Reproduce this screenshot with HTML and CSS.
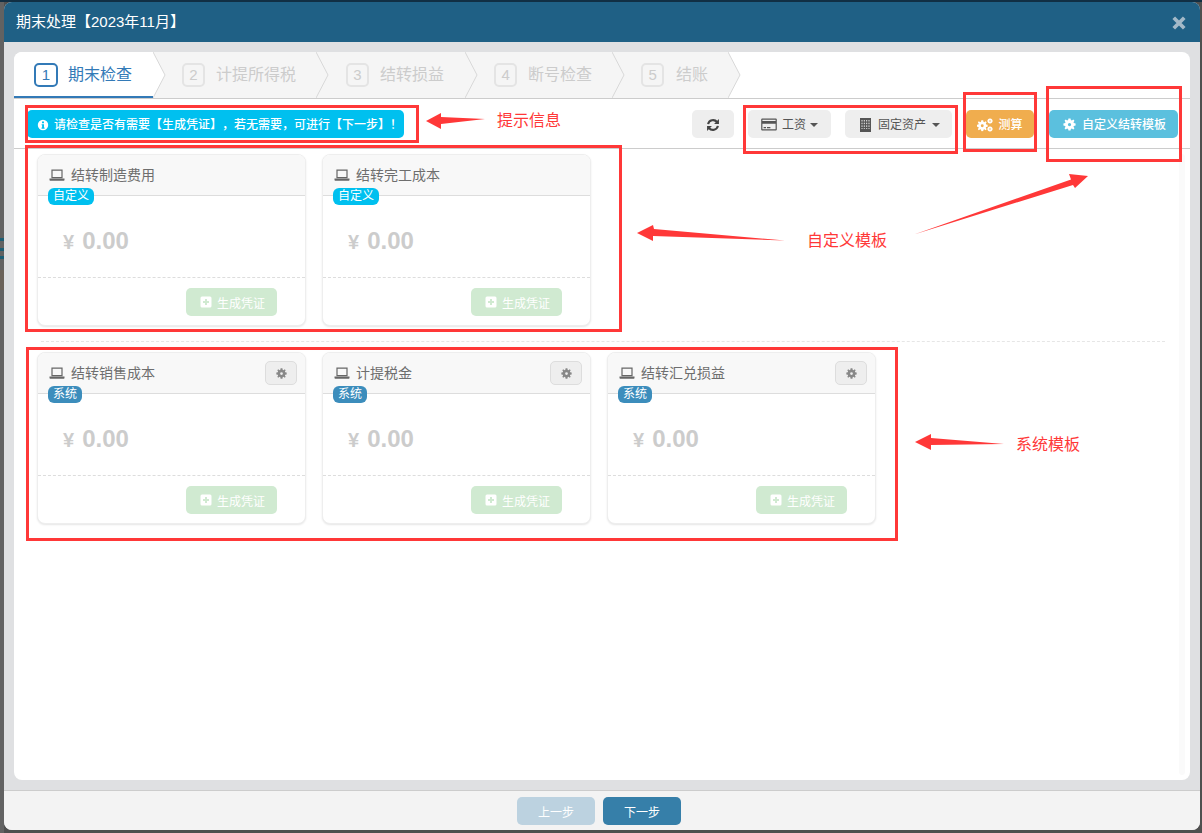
FILE: index.html
```html
<!DOCTYPE html>
<html lang="zh-CN">
<head>
<meta charset="utf-8">
<title>期末处理</title>
<link rel="stylesheet" href="styles.css">
</head>
<body>
<svg class="defs" width="0" height="0" aria-hidden="true">
  <defs>
    <symbol id="gear" viewBox="0 0 16 16"><path fill="currentColor" fill-rule="evenodd" d="M6.7.5H9.3L9.7 2.6 10.9 3.1 12.7 1.9 14.1 3.3 12.9 5.1 13.4 6.3 15.5 6.7V9.3L13.4 9.7 12.9 10.9 14.1 12.7 12.7 14.1 10.9 12.9 9.7 13.4 9.3 15.5H6.7L6.3 13.4 5.1 12.9 3.3 14.1 1.9 12.7 3.1 10.9 2.6 9.7.5 9.3V6.7L2.6 6.3 3.1 5.1 1.9 3.3 3.3 1.9 5.1 3.1 6.3 2.6ZM8 6A2 2 0 1 0 8 10 2 2 0 1 0 8 6Z"/></symbol>
    <symbol id="laptop" viewBox="0 0 16 14"><path fill="none" stroke="currentColor" stroke-width="1.2" d="M3 2.1H13V9.6H3Z"/><path fill="currentColor" d="M.5 10.6H15.5V12.2L14.8 12.8H1.2L.5 12.2Z"/></symbol>
    <symbol id="plus" viewBox="0 0 12 12"><path fill="#fff" fill-rule="evenodd" d="M2 .5H10A1.5 1.5 0 0 1 11.500 2V10A1.500 1.500 0 0 1 10 11.500H2A1.500 1.500 0 0 1 .5 10V2A1.500 1.500 0 0 1 2 .5ZM5 3V5H3V7H5V9H7V7H9V5H7V3Z"/></symbol>
  </defs>
</svg>

<div class="backdrop">
  <span class="peek-left"></span>
  <span class="peek-bar peek-a"></span>
  <span class="peek-bar peek-b"></span>
  <span class="peek-bar peek-c"></span>
  <span class="peek-photo"></span>
</div>

<main class="modal">
  <header class="modal-head">
    <h1 class="modal-title">期末处理【2023年11月】</h1>
    <svg class="close" viewBox="0 0 12 12" aria-label="关闭"><path d="M1.500 1.500 10.500 10.500M10.500 1.500 1.500 10.500"/></svg>
  </header>

  <div class="modal-body">
    <section class="panel">
      <nav class="tabs">
        <div class="tab active"><span class="num">1</span><span>期末检查</span><svg class="chev" viewBox="0 0 13 46"><path class="chev-fill" d="M0 0 12 23 0 46Z"/><path class="chev-line" d="M0 0 12 23 0 46"/></svg></div>
        <div class="tab"><span class="num">2</span><span>计提所得税</span><svg class="chev" viewBox="0 0 13 46"><path class="chev-fill" d="M0 0 12 23 0 46Z"/><path class="chev-line" d="M0 0 12 23 0 46"/></svg></div>
        <div class="tab tab-wide"><span class="num">3</span><span>结转损益</span><svg class="chev" viewBox="0 0 13 46"><path class="chev-fill" d="M0 0 12 23 0 46Z"/><path class="chev-line" d="M0 0 12 23 0 46"/></svg></div>
        <div class="tab"><span class="num">4</span><span>断号检查</span><svg class="chev" viewBox="0 0 13 46"><path class="chev-fill" d="M0 0 12 23 0 46Z"/><path class="chev-line" d="M0 0 12 23 0 46"/></svg></div>
        <div class="tab tab-last"><span class="num">5</span><span>结账</span><svg class="chev" viewBox="0 0 13 46"><path class="chev-fill" d="M0 0 12 23 0 46Z"/><path class="chev-line" d="M0 0 12 23 0 46"/></svg></div>
      </nav>

      <div class="toolbar">
        <div class="alert">
          <svg class="ico-12" viewBox="0 0 12 12"><path fill="#fff" fill-rule="evenodd" d="M6 .8A5.200 5.200 0 1 0 6 11.200 5.200 5.200 0 1 0 6 .8ZM5 2.500H7V4.300H5ZM4.600 5.200H7V8.600H7.600V9.700H4.500V8.600H5.100V6.300H4.600Z"/></svg>
          <span>请检查是否有需要【生成凭证】，若无需要，可进行【下一步】！</span>
        </div>
        <div class="actions">
          <button class="btn btn-refresh" aria-label="刷新">
            <svg class="ico-14" viewBox="0 0 16 16"><path fill="none" stroke="#444" stroke-width="2.400" d="M2.400 7A5.800 5.800 0 0 1 12.600 4.600M13.600 9A5.800 5.800 0 0 1 3.400 11.400"/><path fill="#444" d="M14.800 1.200V6.800H9.200ZM1.200 14.800V9.200H6.800Z"/></svg>
          </button>
          <button class="btn btn-grey">
            <svg class="ico-card" viewBox="0 0 16 13"><path fill="#555" fill-rule="evenodd" d="M1.200.5H14.800A1 1 0 0 1 15.800 1.500V11.500A1 1 0 0 1 14.800 12.500H1.200A1 1 0 0 1 .2 11.500V1.500A1 1 0 0 1 1.200.5ZM1.400 1.700V3H14.600V1.700ZM1.400 5.800V11.300H14.600V5.800ZM2.600 9H5V10.200H2.600ZM6 9H9.400V10.200H6Z"/></svg>
            <span>工资</span><i class="caret"></i>
          </button>
          <button class="btn btn-grey btn-assets">
            <svg class="ico-bld" viewBox="0 0 11 14"><path fill="#555" d="M0 0H11V14H0Z"/><path fill="none" stroke="#eee" stroke-width="1" stroke-dasharray="1.500 1.200" d="M2 2V11M4.300 2V11M6.700 2V11M9 2V11"/></svg>
            <span>固定资产</span><i class="caret"></i>
          </button>
          <button class="btn btn-orange">
            <svg class="ico-cogs" viewBox="0 0 16 14"><use href="#gear" x="-.5" y="2" width="11.500" height="11.500"/><use href="#gear" x="10" y="0" width="6" height="6"/><use href="#gear" x="10" y="8" width="6" height="6"/></svg>
            <span>测算</span>
          </button>
          <button class="btn btn-info">
            <svg class="ico-gear" viewBox="0 0 16 16"><use href="#gear"/></svg>
            <span>自定义结转模板</span>
          </button>
        </div>
      </div>

      <div class="content">
        <div class="card-row">
          <article class="card">
            <div class="card-head"><svg class="ico-laptop"><use href="#laptop"/></svg><span>结转制造费用</span></div>
            <span class="badge badge-custom">自定义</span>
            <div class="card-body"><span class="yen">¥</span><span class="amount">0.00</span></div>
            <div class="card-foot"><button class="btn-gen"><svg class="ico-plus"><use href="#plus"/></svg>生成凭证</button></div>
          </article>
          <article class="card">
            <div class="card-head"><svg class="ico-laptop"><use href="#laptop"/></svg><span>结转完工成本</span></div>
            <span class="badge badge-custom">自定义</span>
            <div class="card-body"><span class="yen">¥</span><span class="amount">0.00</span></div>
            <div class="card-foot"><button class="btn-gen"><svg class="ico-plus"><use href="#plus"/></svg>生成凭证</button></div>
          </article>
        </div>

        <hr class="divider">

        <div class="card-row">
          <article class="card">
            <div class="card-head"><svg class="ico-laptop"><use href="#laptop"/></svg><span>结转销售成本</span><button class="btn-set" aria-label="设置"><svg class="ico-set"><use href="#gear"/></svg></button></div>
            <span class="badge badge-system">系统</span>
            <div class="card-body"><span class="yen">¥</span><span class="amount">0.00</span></div>
            <div class="card-foot"><button class="btn-gen"><svg class="ico-plus"><use href="#plus"/></svg>生成凭证</button></div>
          </article>
          <article class="card">
            <div class="card-head"><svg class="ico-laptop"><use href="#laptop"/></svg><span>计提税金</span><button class="btn-set" aria-label="设置"><svg class="ico-set"><use href="#gear"/></svg></button></div>
            <span class="badge badge-system">系统</span>
            <div class="card-body"><span class="yen">¥</span><span class="amount">0.00</span></div>
            <div class="card-foot"><button class="btn-gen"><svg class="ico-plus"><use href="#plus"/></svg>生成凭证</button></div>
          </article>
          <article class="card">
            <div class="card-head"><svg class="ico-laptop"><use href="#laptop"/></svg><span>结转汇兑损益</span><button class="btn-set" aria-label="设置"><svg class="ico-set"><use href="#gear"/></svg></button></div>
            <span class="badge badge-system">系统</span>
            <div class="card-body"><span class="yen">¥</span><span class="amount">0.00</span></div>
            <div class="card-foot"><button class="btn-gen"><svg class="ico-plus"><use href="#plus"/></svg>生成凭证</button></div>
          </article>
        </div>
      </div>
      <span class="scroll-track"></span>
    </section>
  </div>

  <footer class="modal-foot">
    <button class="btn-step btn-prev">上一步</button>
    <button class="btn-step btn-next">下一步</button>
  </footer>
</main>

<div class="notes">
  <span class="box box-tip"></span>
  <span class="box box-custom"></span>
  <span class="box box-system"></span>
  <span class="box box-drop"></span>
  <span class="box box-calc"></span>
  <span class="box box-tpl"></span>
  <svg class="arrows" viewBox="0 0 1202 833">
    <path d="M426 121 441 113 441 117 485 119 441 124 441 129Z"/>
    <path d="M637 233 653 225 654 229 785 240.500 653 236 653 241Z"/>
    <path d="M914 234.500 1071 179.500 1069 174 1088 176 1075 188 1073 185Z"/>
    <path d="M915 442 931 434 931 438 1004 444 931 445 931 450Z"/>
  </svg>
  <span class="note note-tip">提示信息</span>
  <span class="note note-custom">自定义模板</span>
  <span class="note note-system">系统模板</span>
</div>
</body>
</html>
```

FILE: styles.css
```css
* { box-sizing: border-box; }

html, body { margin: 0; height: 100%; }

body {
  width: 1202px;
  height: 833px;
  overflow: hidden;
  background: #4f4f4f;
  font-family: "Liberation Sans", "Noto Sans CJK SC", sans-serif;
  font-size: 12px;
  color: #555;
  position: relative;
  padding: 2px 2px 3px 4px;
  text-spacing-trim: space-all;
}

button { font-family: inherit; border: 0; margin: 0; cursor: pointer; }

.defs { position: absolute; }

/* page behind the dialog */
.backdrop {
  position: absolute;
  inset: 0;
  border-top: 2px solid #112f44;
}
.peek-left { position: absolute; left: 0; top: 0; bottom: 0; width: 4px; background: #626262; }
.peek-bar { position: absolute; left: 0; width: 4px; height: 3px; background: #1b5d74; }
.peek-a { top: 236px; }
.peek-b { top: 246px; }
.peek-c { top: 254px; }
.peek-photo { position: absolute; left: 0; top: 268px; width: 4px; height: 20px; background: #6b6259; }

/* dialog */
.modal {
  position: relative;
  height: 828px;
  display: flex;
  flex-direction: column;
  border-radius: 8px;
  overflow: hidden;
  background: #dfe0e2;
}

.modal-head {
  height: 40px;
  flex: none;
  display: flex;
  align-items: center;
  justify-content: space-between;
  padding: 0 14px 0 12px;
  background: #1f6085;
}
.modal-title {
  margin: 0;
  font-size: 15px;
  font-weight: 400;
  line-height: 20px;
  color: #fff;
}
.close { width: 14px; height: 14px; margin-top: 1px; }
.close path { fill: none; stroke: #a3b9c8; stroke-width: 3.200; }

.modal-body {
  flex: 1;
  min-height: 0;
  padding: 10px;
}

.panel {
  position: relative;
  height: 100%;
  background: #fff;
  border-radius: 8px;
  overflow: hidden;
}

/* steps */
.tabs {
  display: flex;
  height: 47px;
  border-bottom: 1px solid #ccc;
}
.tab {
  position: relative;
  height: 46px;
  display: flex;
  align-items: center;
  gap: 11px;
  padding: 0 20px 0 29px;
  background: #f5f5f5;
  font-size: 16px;
  line-height: 22px;
  color: #ccc;
}
.tab.active {
  padding: 0 21px 0 20px;
  gap: 10px;
  background: #fff;
  color: #337ab7;
  box-shadow: inset 0 -2px 0 #337ab7;
}
.tab-wide { padding: 0 21px 0 30px; }
.tab-last { gap: 12px; }
.num {
  width: 23px;
  height: 24px;
  display: flex;
  align-items: center;
  justify-content: center;
  border: 2px solid #e4e4e4;
  border-radius: 5px;
  font-size: 15px;
  color: #ccc;
}
.active .num { width: 24px; border-color: #337ab7; color: #337ab7; }
.chev {
  position: absolute;
  top: 0;
  left: 100%;
  z-index: 1;
  width: 13px;
  height: 46px;
}
.chev-fill { fill: #f5f5f5; }
.active .chev-fill { fill: #fff; }
.chev-line { fill: none; stroke: #d8d8d8; stroke-width: 1; }

/* toolbar */
.toolbar {
  height: 50px;
  display: flex;
  align-items: flex-start;
  justify-content: space-between;
  padding: 11px 12px 0 13px;
  border-bottom: 1px solid #ccc;
}
.alert {
  width: 377px;
  height: 28px;
  display: flex;
  align-items: center;
  gap: 5px;
  padding: 1px 0 0 10px;
  background: #00c0ef;
  border-radius: 5px;
  color: #fff;
  font-size: 12px;
  font-weight: 500;
  line-height: 16px;
  white-space: nowrap;
}
.ico-12 { width: 12px; height: 12px; flex: none; }

.actions { display: flex; gap: 14px; }
.btn {
  height: 28px;
  display: flex;
  align-items: center;
  justify-content: center;
  padding: 1px 0 0;
  border-radius: 5px;
  font-size: 12px;
  line-height: 16px;
}
.btn-refresh { width: 42px; background: #eee; }
.ico-14 { width: 14px; height: 14px; }
.btn-grey { width: 83px; gap: 5px; background: #eee; color: #555; }
.btn-assets { width: 107px; gap: 7px; justify-content: flex-start; padding-left: 15px; }
.ico-card { width: 16px; height: 13px; }
.ico-bld { width: 11px; height: 14px; }
.caret {
  width: 0;
  height: 0;
  margin-left: -1px;
  border-left: 4px solid transparent;
  border-right: 4px solid transparent;
  border-top: 4px solid #555;
}
.btn-orange { width: 68px; gap: 5px; background: #f0ad4e; color: #fff; font-weight: 500; }
.ico-cogs { width: 16px; height: 14px; color: #fff; }
.btn-info { width: 129px; margin-left: 1px; gap: 6px; padding-left: 2px; background: #5bc0de; color: #fff; font-weight: 500; }
.ico-gear { width: 13px; height: 13px; color: #fff; }

/* cards */
.content { padding: 5px 0 0 23px; }
.card-row { display: flex; gap: 16px; }
.card {
  position: relative;
  width: 269px;
  height: 172px;
  display: flex;
  flex-direction: column;
  background: #fff;
  border: 1px solid #eee;
  border-radius: 8px;
  box-shadow: 0 1px 2px rgba(0, 0, 0, .1);
  overflow: hidden;
}
.card-head {
  height: 41px;
  flex: none;
  display: flex;
  align-items: center;
  gap: 6px;
  padding: 0 8px 0 11px;
  background: #f8f8f8;
  border-bottom: 1px solid #ddd;
  font-size: 14px;
  line-height: 20px;
  color: #6e6e6e;
}
.ico-laptop { width: 16px; height: 14px; color: #666; flex: none; }
.btn-set {
  width: 32px;
  height: 24px;
  margin-left: auto;
  display: flex;
  align-items: center;
  justify-content: center;
  padding: 0;
  background: #eee;
  border: 1px solid #ddd;
  border-radius: 5px;
}
.ico-set { width: 11px; height: 11px; color: #888; }

.badge {
  position: absolute;
  top: 33px;
  left: 10px;
  height: 17px;
  padding: 0 5px;
  border-radius: 6px;
  color: #fff;
  font-size: 12px;
  line-height: 17px;
}
.badge-custom { background: #00c0ef; }
.badge-system { background: #3c8dbc; }

.card-body {
  height: 82px;
  flex: none;
  display: flex;
  align-items: center;
  gap: 8px;
  padding: 8px 0 0 25px;
  border-bottom: 1px dashed #ddd;
  font-weight: 700;
  color: #ccc;
}
.yen { font-size: 20px; line-height: 24px; padding-top: 2px; }
.amount { font-size: 24px; line-height: 28px; }

.card-foot {
  flex: 1;
  display: flex;
  justify-content: flex-end;
  align-items: flex-start;
  padding: 10px 28px 0 0;
}
.btn-gen {
  width: 91px;
  height: 28px;
  display: flex;
  align-items: center;
  justify-content: center;
  gap: 5px;
  padding: 0 0 0 2px;
  background: #d0ead1;
  border-radius: 5px;
  color: #fff;
  font-size: 12px;
}
.ico-plus { width: 12px; height: 12px; }

.divider {
  height: 0;
  margin: 15px 25px 10px 4px;
  border: 0;
  border-top: 1px dashed #e6e6e6;
}

.scroll-track {
  position: absolute;
  top: 102px;
  right: 5px;
  bottom: 5px;
  width: 6px;
  border-radius: 3px;
  background: #fafafa;
}

/* footer */
.modal-foot {
  height: 40px;
  flex: none;
  display: flex;
  justify-content: center;
  gap: 8px;
  padding: 6px 6px 0 0;
  background: #f3f3f3;
  border-top: 1px solid #ccc;
}
.btn-step {
  width: 78px;
  height: 28px;
  border-radius: 5px;
  color: #fff;
  font-size: 12px;
}
.btn-prev { background: #bcd2e0; }
.btn-next { background: #367fa9; }

/* annotations drawn on the screenshot */
.notes { position: absolute; inset: 0; pointer-events: none; }
.box { position: absolute; border: 3px solid #ff3838; }
.box-tip { left: 25px; top: 105px; width: 394px; height: 38px; }
.box-custom { left: 25px; top: 145px; width: 597px; height: 187px; }
.box-system { left: 26px; top: 347px; width: 872px; height: 194px; }
.box-drop { left: 743px; top: 105px; width: 215px; height: 49px; }
.box-calc { left: 963px; top: 92px; width: 74px; height: 60px; }
.box-tpl { left: 1046px; top: 86px; width: 136px; height: 76px; }
.arrows { position: absolute; left: 0; top: 0; width: 1202px; height: 833px; }
.arrows path { fill: #ff3838; }
.note {
  position: absolute;
  color: #ff3838;
  font-size: 16px;
  line-height: 22px;
  white-space: nowrap;
}
.note-tip { left: 497px; top: 110px; }
.note-custom { left: 807px; top: 230px; }
.note-system { left: 1016px; top: 434px; }
```
